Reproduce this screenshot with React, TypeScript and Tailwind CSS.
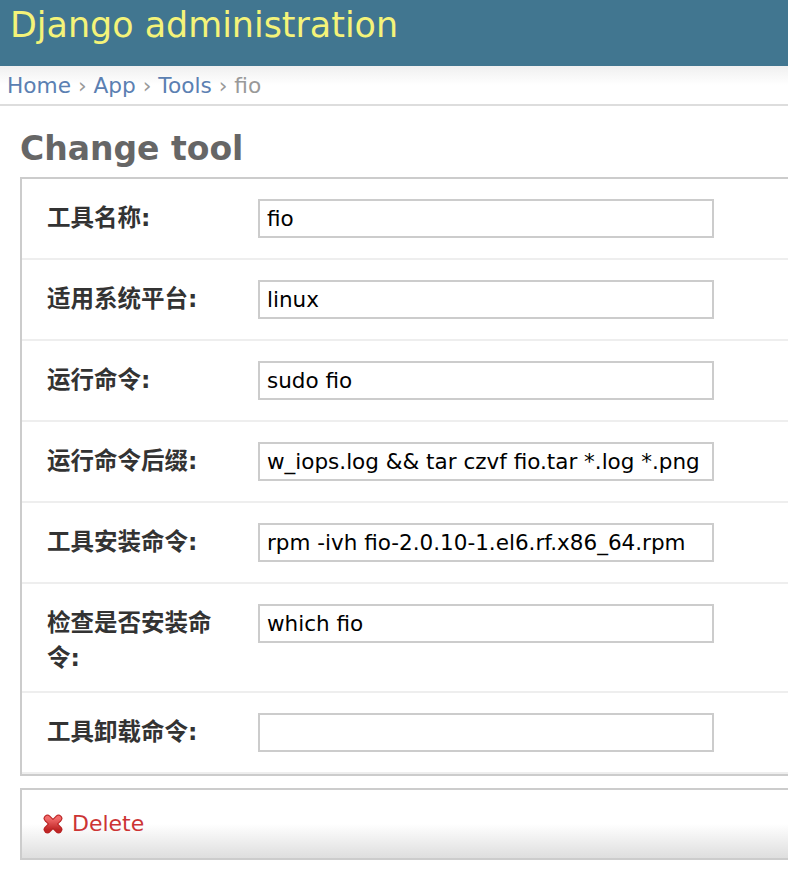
import React from "react";

const rows: { label: string; value: string }[] = [
  { label: "工具名称:", value: "fio" },
  { label: "适用系统平台:", value: "linux" },
  { label: "运行命令:", value: "sudo fio" },
  { label: "运行命令后缀:", value: "w_iops.log && tar czvf fio.tar *.log *.png" },
  { label: "工具安装命令:", value: "rpm -ivh fio-2.0.10-1.el6.rf.x86_64.rpm" },
  { label: "检查是否安装命令:", value: "which fio" },
  { label: "工具卸载命令:", value: "" },
];

const latin = "font-['DejaVu_Sans','Noto_Sans_CJK_SC',sans-serif]";

function DeleteIcon() {
  return (
    <svg width="20" height="20" viewBox="0 0 20 20" className="shrink-0">
      <defs>
        <linearGradient id="dg" x1="0" y1="0" x2="0" y2="1">
          <stop offset="0" stopColor="#f26a6a" />
          <stop offset="1" stopColor="#c02626" />
        </linearGradient>
      </defs>
      <g stroke="#b82222" strokeWidth="7.5" strokeLinecap="round">
        <line x1="4.5" y1="4.5" x2="15.5" y2="15.5" />
        <line x1="15.5" y1="4.5" x2="4.5" y2="15.5" />
      </g>
      <g stroke="url(#dg)" strokeWidth="5.5" strokeLinecap="round">
        <line x1="4.5" y1="4.5" x2="15.5" y2="15.5" />
        <line x1="15.5" y1="4.5" x2="4.5" y2="15.5" />
      </g>
    </svg>
  );
}

export default function App() {
  return (
    <div className={`w-[788px] h-[876px] overflow-hidden bg-white ${latin}`}>
      <div className="h-[66px] bg-[#417690] pl-[10px] pt-[3px]">
        <div className="text-[34.9px] leading-[44px] text-[#f4f379]">
          Django administration
        </div>
      </div>
      <div className="h-[40px] bg-gradient-to-b from-[#f0f0f0] via-white to-white border-b-[2px] border-[#dddddd] pl-[7px] pt-[5px] text-[21.7px] leading-[30px] text-[#999999]">
        <span className="text-[#5b80b2]">Home</span>
        <span> › </span>
        <span className="text-[#5b80b2]">App</span>
        <span> › </span>
        <span className="text-[#5b80b2]">Tools</span>
        <span> › </span>
        <span>fio</span>
      </div>
      <div className="pl-[20px] pt-[19px]">
        <h1 className="text-[33px] leading-[48px] font-bold text-[#666666] mb-[4px]">
          Change tool
        </h1>
        <div className="w-[800px] border-2 border-[#cccccc]">
          {rows.map((r, i) => (
            <div
              key={i}
              className="flex items-start pl-[25px] pt-[20px] pb-[16px] border-b-2 border-[#eeeeee]"
            >
              <div className="w-[211px] shrink-0 pt-[2px]">
                <div className="w-[175px] text-[23.5px] leading-[34.5px] font-bold text-[#333333]">
                  {r.label}
                </div>
              </div>
              <div className="w-[456px] h-[39px] mb-[4px] border-2 border-[#cccccc] pl-[7px] text-[21.5px] leading-[35px] text-black whitespace-nowrap overflow-hidden">
                {r.value}
              </div>
            </div>
          ))}
        </div>
        <div className="w-[800px] h-[72px] mt-[12px] border-2 border-[#cccccc] bg-gradient-to-b from-white via-white to-[#dedede] flex items-center pl-[21px] gap-[9px]">
          <DeleteIcon />
          <span className="text-[22px] text-[#cc3434] leading-[30px]">Delete</span>
        </div>
      </div>
    </div>
  );
}
